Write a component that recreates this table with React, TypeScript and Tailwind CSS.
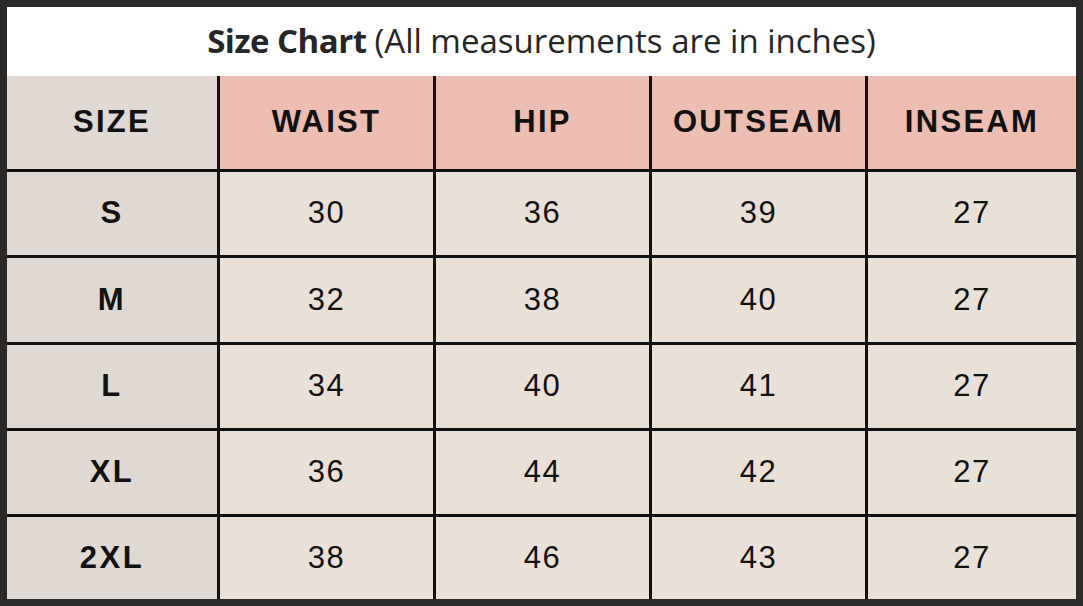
const columns = ["SIZE", "WAIST", "HIP", "OUTSEAM", "INSEAM"];

const rows = [
  ["S", "30", "36", "39", "27"],
  ["M", "32", "38", "40", "27"],
  ["L", "34", "40", "41", "27"],
  ["XL", "36", "44", "42", "27"],
  ["2XL", "38", "46", "43", "27"],
];

export default function App() {
  return (
    <div className="w-[1083px] h-[606px] bg-[#2b2a28] p-[7px]">
      <div className="flex h-full flex-col bg-white">
        <div className="flex h-[69px] items-center justify-center pb-[1px] text-[33px] text-[#262626] font-['Open_Sans','Lato',sans-serif]">
          <span className="font-bold tracking-[-0.5px]">Size Chart</span>
          <span className="ml-[8px]">(All measurements are in inches)</span>
        </div>
        <div className="grid flex-1 grid-cols-[210px_213px_213px_213px_208px] grid-rows-[93px_83px_84px_83px_83px_82px] gap-[3px] bg-[#111] font-['Liberation_Sans',Arial,sans-serif] text-[#111]">
          {columns.map((c, i) => (
            <div
              key={c}
              className={`flex items-center justify-center text-[31px] font-bold tracking-[2.3px] ${
                i === 0 ? "bg-[#dfd8d3]" : "bg-[#ecbdb0]"
              }`}
            >
              {c}
            </div>
          ))}
          {rows.map((r) =>
            r.map((v, i) => (
              <div
                key={r[0] + i}
                className={`flex items-center justify-center text-[31px] ${
                  i === 0 ? "bg-[#dfd8d3] font-bold tracking-[2.5px]" : "bg-[#e9e1d7] tracking-[1.5px]"
                }`}
              >
                {v}
              </div>
            ))
          )}
        </div>
      </div>
    </div>
  );
}
